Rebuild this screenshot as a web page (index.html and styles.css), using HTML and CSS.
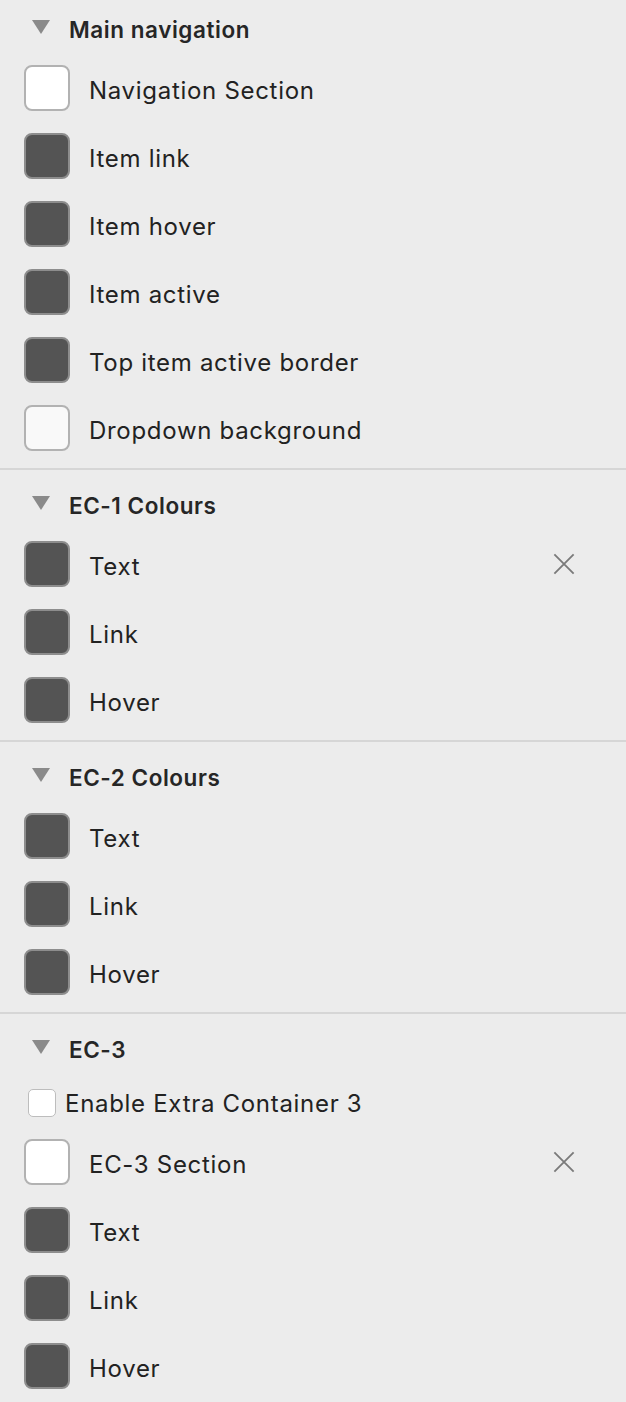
FILE: index.html
```html
<!DOCTYPE html>
<html>
<head>
<meta charset="utf-8">
<link rel="stylesheet" href="styles.css">
</head>
<body>
<div class="panel">
  <section class="group first">
    <div class="group-head"><span class="tri"></span><span class="head-label">Main navigation</span></div>
    <div class="row"><span class="swatch white"></span><span class="label">Navigation Section</span></div>
    <div class="row"><span class="swatch dark"></span><span class="label">Item link</span></div>
    <div class="row"><span class="swatch dark"></span><span class="label">Item hover</span></div>
    <div class="row"><span class="swatch dark"></span><span class="label">Item active</span></div>
    <div class="row"><span class="swatch dark"></span><span class="label">Top item active border</span></div>
    <div class="row"><span class="swatch offwhite"></span><span class="label">Dropdown background</span></div>
  </section>
  <section class="group">
    <div class="group-head"><span class="tri"></span><span class="head-label">EC-1 Colours</span></div>
    <div class="row"><span class="swatch dark"></span><span class="label">Text</span>
      <svg class="clear" width="24" height="24" viewBox="0 0 24 24"><path d="M1.5 1.5 L22.5 22.5 M22.5 1.5 L1.5 22.5" stroke="#7a7a7a" stroke-width="2" fill="none"/></svg>
    </div>
    <div class="row"><span class="swatch dark"></span><span class="label">Link</span></div>
    <div class="row"><span class="swatch dark"></span><span class="label">Hover</span></div>
  </section>
  <section class="group">
    <div class="group-head"><span class="tri"></span><span class="head-label">EC-2 Colours</span></div>
    <div class="row"><span class="swatch dark"></span><span class="label">Text</span></div>
    <div class="row"><span class="swatch dark"></span><span class="label">Link</span></div>
    <div class="row"><span class="swatch dark"></span><span class="label">Hover</span></div>
  </section>
  <section class="group last">
    <div class="group-head"><span class="tri"></span><span class="head-label">EC-3</span></div>
    <label class="check-row"><span class="checkbox"></span><span class="label">Enable Extra Container 3</span></label>
    <div class="row"><span class="swatch white"></span><span class="label">EC-3 Section</span>
      <svg class="clear" width="24" height="24" viewBox="0 0 24 24"><path d="M1.5 1.5 L22.5 22.5 M22.5 1.5 L1.5 22.5" stroke="#7a7a7a" stroke-width="2" fill="none"/></svg>
    </div>
    <div class="row"><span class="swatch dark"></span><span class="label">Text</span></div>
    <div class="row"><span class="swatch dark"></span><span class="label">Link</span></div>
    <div class="row"><span class="swatch dark"></span><span class="label">Hover</span></div>
  </section>
</div>
</body>
</html>
```
FILE: styles.css
```css
html, body {
  margin: 0;
  padding: 0;
  background: #ececec;
}
body {
  font-family: Inter, "Open Sans", "Liberation Sans", sans-serif;
  color: #262626;
  width: 626px;
  height: 1402px;
  overflow: hidden;
}
.panel {
  display: flex;
  flex-direction: column;
}
.group {
  display: flex;
  flex-direction: column;
  padding-top: 12px;
  padding-bottom: 4px;
  border-bottom: 2px solid #d6d6d6;
}
.group.first {
  padding-top: 6px;
}
.group.last {
  border-bottom: none;
}
.group-head {
  height: 46px;
  display: flex;
  align-items: center;
  margin-bottom: 4px;
}
.tri {
  width: 0;
  height: 0;
  margin-left: 32px;
  margin-right: 19px;
  border-left: 9px solid transparent;
  border-right: 9px solid transparent;
  border-top: 14px solid #8a8a8a;
  margin-top: -4px;
}
.head-label {
  font-size: 22.5px;
  font-weight: 600;
  letter-spacing: 0.55px;
  color: #262626;
}
.row {
  height: 68px;
  display: flex;
  align-items: center;
}
.swatch {
  width: 42px;
  height: 42px;
  border: 2px solid #a9a9a9;
  border-radius: 8px;
  margin-left: 24px;
  margin-right: 19px;
  margin-top: -4px;
  flex: none;
}
.swatch.white { background: #ffffff; border-color: #b2b2b2; }
.swatch.offwhite { background: #f9f9f9; border-color: #b2b2b2; }
.swatch.dark { background: #545454; border-color: #8d8d8d; }
.label {
  font-size: 24px;
  font-weight: 400;
  letter-spacing: 0.7px;
  color: #222222;
}
.clear {
  margin-left: auto;
  margin-right: 51px;
  margin-top: -4px;
  width: 22px;
  height: 22px;
}
.check-row {
  height: 54px;
  display: flex;
  align-items: center;
}
.checkbox {
  width: 26px;
  height: 26px;
  border: 1px solid #bdbdbd;
  border-radius: 5px;
  background: #fff;
  margin-left: 28px;
  margin-right: 9px;
  flex: none;
}
```
